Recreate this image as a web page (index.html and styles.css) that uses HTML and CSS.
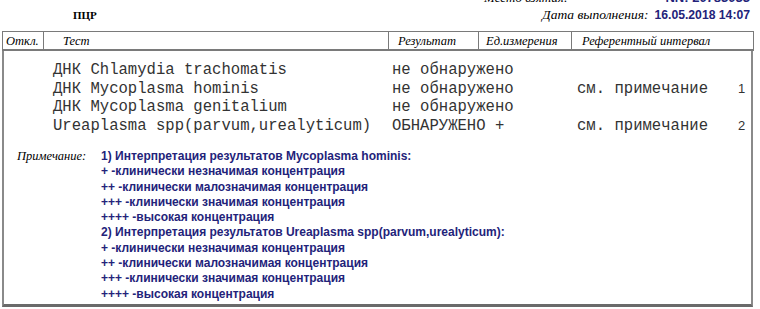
FILE: index.html
```html
<!DOCTYPE html>
<html lang="ru">
<head>
<meta charset="utf-8">
<link rel="stylesheet" href="styles.css">
</head>
<body>
<div class="page">
  <div class="top">
    <div class="top-line1">
      <span class="place">Место взятия:</span>
      <span class="nn">NN: 20783033</span>
    </div>
    <div class="top-line2">
      <span class="pcr">ПЦР</span>
      <span class="date-label">Дата выполнения:</span>
      <span class="date">16.05.2018 14:07</span>
    </div>
  </div>
  <div class="head">
    <div class="hc">Откл.</div>
    <div class="hc hc-test">Тест</div>
    <div class="hc">Результат</div>
    <div class="hc">Ед.измерения</div>
    <div class="hc">Референтный интервал</div>
  </div>
  <div class="box">
    <div class="rows">
      <div class="row"><span>ДНК Chlamydia trachomatis</span><span>не обнаружено</span><span></span><span></span></div>
      <div class="row"><span>ДНК Mycoplasma hominis</span><span>не обнаружено</span><span>см. примечание</span><span class="num">1</span></div>
      <div class="row"><span>ДНК Mycoplasma genitalium</span><span>не обнаружено</span><span></span><span></span></div>
      <div class="row"><span>Ureaplasma spp(parvum,urealyticum)</span><span>ОБНАРУЖЕНО +</span><span>см. примечание</span><span class="num">2</span></div>
    </div>
    <div class="notes">
      <div class="note-label">Примечание:</div>
      <div class="note-text">
        <div>1) Интерпретация результатов Mycoplasma hominis:</div>
        <div>+ -клинически незначимая концентрация</div>
        <div>++ -клинически малозначимая концентрация</div>
        <div>+++ -клинически значимая концентрация</div>
        <div>++++ -высокая концентрация</div>
        <div>2) Интерпретация результатов Ureaplasma spp(parvum,urealyticum):</div>
        <div>+ -клинически незначимая концентрация</div>
        <div>++ -клинически малозначимая концентрация</div>
        <div>+++ -клинически значимая концентрация</div>
        <div>++++ -высокая концентрация</div>
      </div>
    </div>
  </div>
</div>
</body>
</html>
```
FILE: styles.css
```css
html, body {
  margin: 0;
  padding: 0;
  background: #fff;
}
.page {
  width: 760px;
  height: 309px;
  overflow: hidden;
  font-family: "Liberation Serif", serif;
  color: #000;
}
.top {
  height: 31px;
  display: flex;
  flex-direction: column;
}
.top-line1 {
  height: 14px;
  margin-top: -9px;
  display: flex;
  align-items: baseline;
  line-height: 14px;
}
.place {
  margin-left: 484px;
  font-style: italic;
  font-size: 13px;
}
.nn {
  margin-left: auto;
  margin-right: 10px;
  font-family: "Liberation Sans", sans-serif;
  font-weight: bold;
  font-size: 13px;
  color: #23237a;
}
.top-line2 {
  display: flex;
  align-items: baseline;
  margin-top: 2px;
  line-height: 16px;
}
.pcr {
  margin-left: 73px;
  font-weight: bold;
  font-size: 11px;
}
.date-label {
  margin-left: auto;
  font-style: italic;
  font-size: 13.5px;
}
.date {
  margin-left: 6px;
  margin-right: 10px;
  font-family: "Liberation Sans", sans-serif;
  font-weight: bold;
  font-size: 12.2px;
  color: #23237a;
}
.head {
  margin-left: 2px;
  width: 752px;
  height: 20px;
  box-sizing: border-box;
  border: 1px solid #7a7a7a;
  border-bottom: 2px solid #7a7a7a;
  display: grid;
  grid-template-columns: 40px 345px 90px 93px 1fr;
}
.hc {
  font-style: italic;
  font-size: 12.5px;
  line-height: 18px;
  padding-left: 3px;
  border-left: 1px solid #7a7a7a;
}
.hc:first-child {
  border-left: none;
}
.hc-test {
  padding-left: 19px;
}
.head .hc:nth-child(3) { padding-left: 9px; }
.head .hc:nth-child(4) { padding-left: 7px; }
.head .hc:nth-child(5) { padding-left: 10px; }
.box {
  margin-left: 2px;
  width: 751px;
  height: 256px;
  box-sizing: border-box;
  border-left: 2px solid #8a8a8a;
  border-right: 2px solid #8a8a8a;
  border-bottom: 3px solid #6a6a6a;
  padding-top: 10px;
}
.rows {
  font-family: "Liberation Mono", monospace;
  font-size: 15.6px;
  color: #333;
}
.row {
  display: grid;
  grid-template-columns: 339px 185px 161px 1fr;
  padding-left: 49px;
  height: 18.5px;
  line-height: 18.5px;
  white-space: pre;
}
.num {
  font-family: "Liberation Sans", sans-serif;
  font-size: 13px;
}
.notes {
  display: flex;
  margin-top: 14px;
}
.note-label {
  width: 84px;
  padding-left: 13px;
  font-style: italic;
  font-size: 12.5px;
  line-height: 15.3px;
}
.note-text {
  font-family: "Liberation Sans", sans-serif;
  font-weight: bold;
  font-size: 12px;
  line-height: 15.3px;
  color: #23237a;
}
```
